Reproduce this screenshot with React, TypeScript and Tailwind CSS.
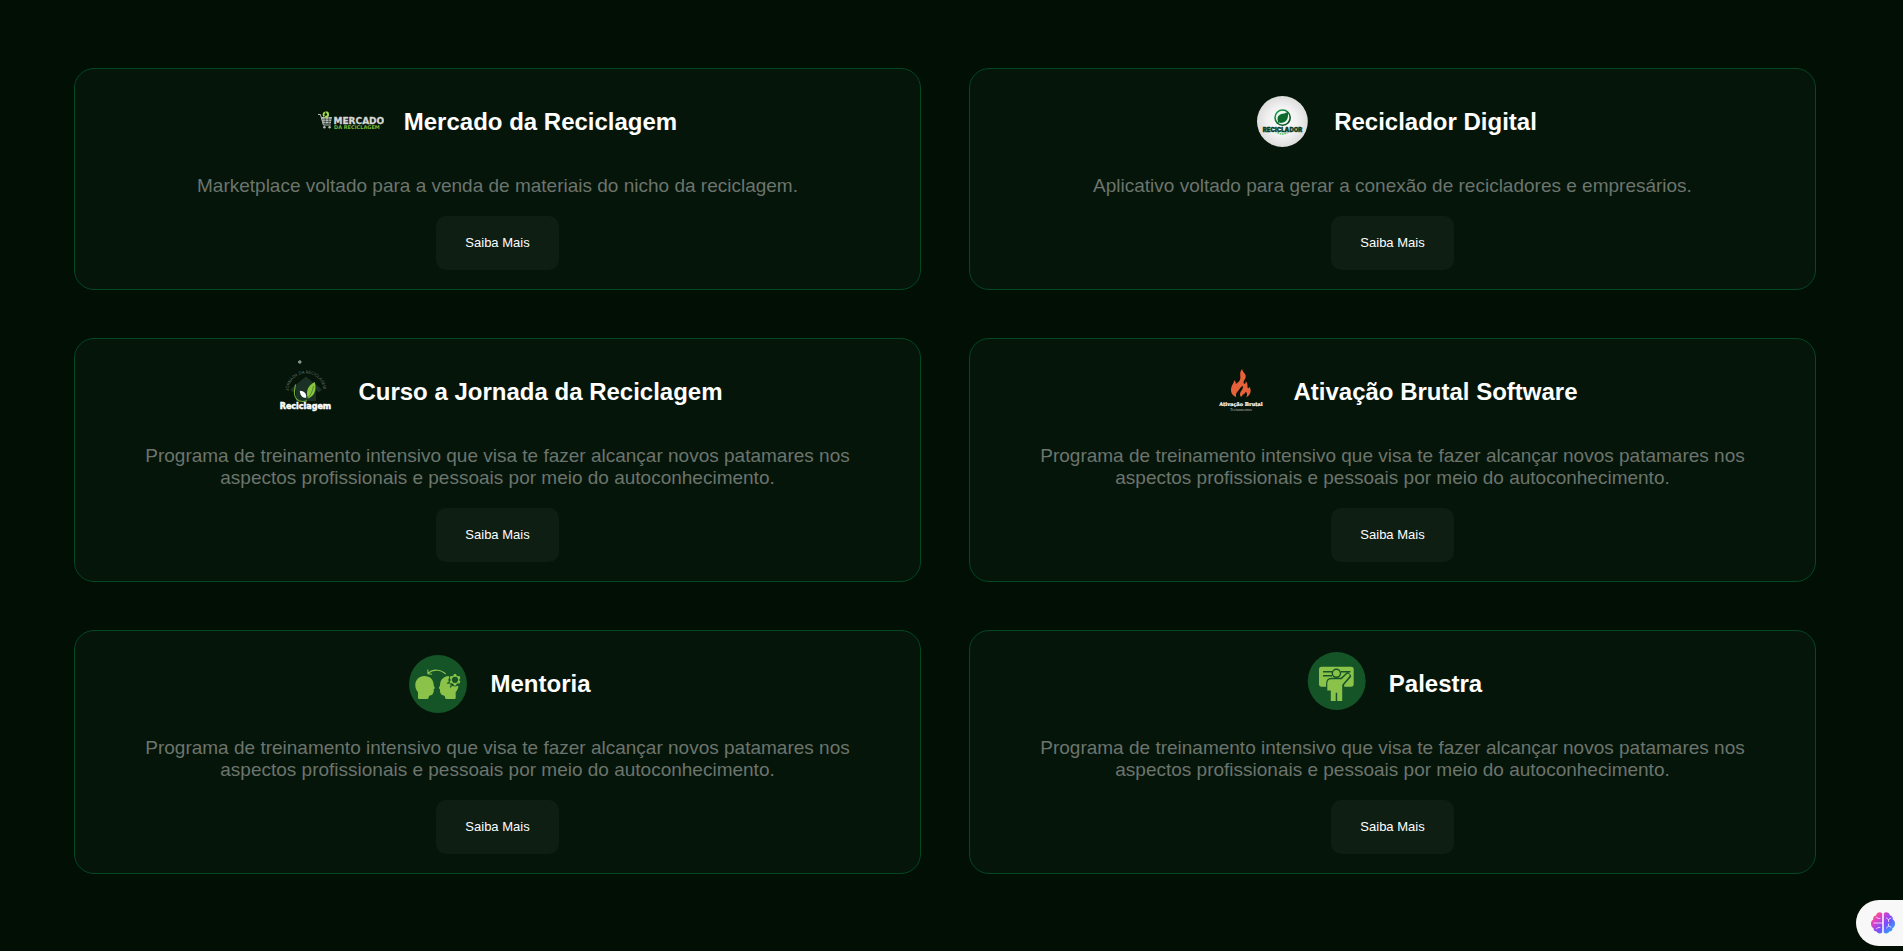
import type { ReactNode } from "react";

function MercadoLogo() {
  return (
    <svg viewBox="0 0 66 66" className="size-full" aria-hidden="true">
      <path d="M0 25.500h2.400l3 10.500h7.400" fill="none" stroke="#b9bdb9" strokeWidth="1" />
      <path d="M3.200 28h10.800l-1.200 6.600H5.200z" fill="#b9bdb9" />
      <path d="M4 30.200h10M5 32.400h8.800M7.200 28v6.600M10.800 28v6.600" stroke="#05150a" strokeWidth=".5" />
      <circle cx="6.400" cy="38.200" r="1.200" fill="#b9bdb9" />
      <circle cx="11.600" cy="38.200" r="1.200" fill="#b9bdb9" />
      <circle cx="7.800" cy="25.500" r="2.300" fill="#05150a" stroke="#a5dc4a" strokeWidth="1.900" strokeDasharray="4.200 .6" />
      <text x="15.500" y="35.300" fontFamily="'DejaVu Sans', sans-serif" fontWeight="700" fontSize="9" fill="#d5d7d5" stroke="#d5d7d5" strokeWidth=".3">
        MERCADO
      </text>
      <text x="16" y="39.600" fontFamily="'DejaVu Sans', sans-serif" fontWeight="700" fontSize="5" fill="#74b83a">
        DA RECICLAGEM
      </text>
    </svg>
  );
}

function RecicladorLogo() {
  return (
    <svg viewBox="0 0 66 66" className="size-full" aria-hidden="true">
      <defs>
        <radialGradient id="disc">
          <stop offset="0" stopColor="#ffffff" />
          <stop offset=".6" stopColor="#f1f1f1" />
          <stop offset="1" stopColor="#dcdddc" />
        </radialGradient>
        <linearGradient id="ring" x1="0" y1="0" x2="1" y2="1">
          <stop offset="0" stopColor="#16a34a" />
          <stop offset="1" stopColor="#06401d" />
        </linearGradient>
      </defs>
      <circle cx="34.400" cy="32.500" r="25.400" fill="url(#disc)" />
      <circle cx="34.600" cy="28.600" r="7.600" fill="#eef7f0" stroke="url(#ring)" strokeWidth="1.600" />
      <path d="M39.600 22.600c1.400 5.600-.4 10.600-5.400 11.200-1.600.2-2.600 0-3.400-.6l-1.300 2-.8-.5 1.300-2.400c-1.500-4.600 1.200-6.900 4.600-7.500 2.200-.4 3.800-.7 5-2.200z" fill="#0a6b2c" />
      <path d="M29.500 43.500q5 3 10 0" fill="none" stroke="#54c46c" strokeWidth="1.600" strokeDasharray="1.600 .8" />
      <text x="34.600" y="43" textAnchor="middle" fontFamily="Inter, sans-serif" fontWeight="900" fontSize="6" fill="#0a3f25" stroke="#0a3f25" strokeWidth=".4">
        RECICLADOR
      </text>
    </svg>
  );
}

function JornadaLogo() {
  return (
    <svg viewBox="0 0 66 66" className="size-full" aria-hidden="true">
      <circle cx="27.800" cy="3" r="1.300" fill="#6d746f" stroke="#b4b8b5" strokeWidth=".8" />
      <path d="M34 17.500 50 30.500l-3 3-3-2.300V42H24V31.200l-3 2.300-3-3z" fill="#1b3125" />
      <path id="arch" d="M16.500 32a17.500 17.500 0 0 1 35 0" fill="none" />
      <text fontFamily="Inter, sans-serif" fontSize="4" fill="#66736b">
        <textPath href="#arch">JORNADA DA RECICLAGEM</textPath>
      </text>
      <path d="M23.600 25.500c-1.600 6-2 12 1.400 15 2.800 2.400 7 2.200 10 1.200" fill="none" stroke="#6fae2f" strokeWidth="1.100" />
      <path d="M42.800 23c1.800 7 .4 13.800-6.800 16.500-3-7.800.7-13.500 6.800-16.500z" fill="#8bc53f" />
      <path d="M41.500 27c-1 5.600-3.600 11-8.500 14.500" fill="none" stroke="#3c6d20" strokeWidth=".7" />
      <path d="M27.800 31.800c4.400.2 7 2.800 6.400 7-3.800.5-6.200-2.600-6.400-7z" fill="#ffffff" />
      <text x="33.500" y="50.300" textAnchor="middle" fontFamily="'DejaVu Sans', sans-serif" fontWeight="700" fontSize="8" fill="#ffffff" stroke="#ffffff" strokeWidth=".5">
        Reciclagem
      </text>
    </svg>
  );
}

function AtivacaoLogo() {
  return (
    <svg viewBox="0 0 66 66" className="size-full" aria-hidden="true">
      <path
        d="M35.300 10C35 13.200 39.200 14.300 38.700 17.800 38.300 20.600 35.900 22 36.800 24.400 38.200 25.400 39 24.200 38.600 22.200 41.200 24 40.200 27 40.800 29 41.600 29.600 42.500 28.700 42.300 27.600 45.200 32 43.200 36.600 39.200 38.300 40.600 35.800 40.200 34 38.800 32.800 37.800 35.400 35.400 35.200 34.200 38.200 32.400 36.600 32.800 34.400 33.800 32.600 35 30.600 36.400 29.400 35.800 26.800 33 28.400 32.600 30.600 30.600 32.600 28.600 34.600 28.800 36.400 29.200 38.300 23 35.600 23.200 29.800 25.400 25.800 26.600 23.700 27 22.900 27 21.200 28.400 22 29 23.300 28.800 25 31.200 23.400 33.400 21.800 33.400 18.800 33.400 15.200 32.400 12.600 35.300 10z"
        fill="#e8613a"
      />
      <text x="34" y="46.700" textAnchor="middle" fontFamily="'DejaVu Serif', serif" fontWeight="700" fontSize="5" fill="#ffffff" stroke="#ffffff" strokeWidth=".2">
        Ativação Brutal
      </text>
      <text x="34" y="51.700" textAnchor="middle" fontFamily="'Liberation Serif', serif" fontSize="4" fill="#b3bab5">
        Treinamentos
      </text>
    </svg>
  );
}

function MentoriaIcon() {
  const teeth = [0, 60, 120, 180, 240, 300];
  return (
    <svg viewBox="0 0 66 66" className="size-full" aria-hidden="true">
      <circle cx="34" cy="33" r="29" fill="#155427" />
      <g fill="#8bc34a">
        <path d="M20.300 25c5.700 0 9 3.600 9.300 8 0 1 .1 1.800.7 2.700.6.900.7 1.700-.2 2.200-.5.300-.6.800-.4 1.500.3.900-.1 1.500-.4 2.200-.4 1.900-1.200 2.700-3.100 2.800-1.200.1-1.400.7-1.500 1.900 0 1.200-.5 1.700-1.700 1.700H15.500c-1 0-1.500-.5-1.500-1.500v-5.300c-1.900-2.200-2.700-4.600-2.700-7.300 0-5 3.900-8.900 9-8.900z" />
        <path d="M44.500 25c-5.300.5-8.100 4-8.400 8 0 1-.1 1.800-.7 2.700-.6.900-.7 1.700.2 2.200.5.300.6.800.4 1.500-.3.900.1 1.500.4 2.200.4 1.900 1.200 2.700 3.100 2.800 1.200.1 1.400.7 1.500 1.900 0 1.200.5 1.700 1.700 1.700h7.500c1 0 1.500-.5 1.500-1.500v-5.300c1.600-1.900 2.500-3.900 2.700-6.200z" />
      </g>
      <circle cx="51" cy="28.800" r="6.600" fill="#155427" />
      <path d="M45.700 31.500l-2.500.8M47.500 34.300l-1.200 2" stroke="#155427" strokeWidth="1.400" />
      <g fill="#8bc34a">
        {teeth.map((a) => (
          <rect key={a} x="49.700" y="23.100" width="2.600" height="2.600" rx=".6" transform={`rotate(${a} 51 28.800)`} />
        ))}
      </g>
      <circle cx="51" cy="28.800" r="3.900" fill="none" stroke="#8bc34a" strokeWidth="1.300" />
      <path d="M41.700 23c-4.700-4.600-12.500-5.400-17.600-.6M23.900 18.500v4.300l4.200.4" fill="none" stroke="#8bc34a" strokeWidth="1.100" />
    </svg>
  );
}

function PalestraIcon() {
  return (
    <svg viewBox="4 0 66 66" className="size-full" aria-hidden="true">
      <circle cx="37.700" cy="30" r="29" fill="#155427" />
      <rect x="20" y="15.700" width="34.700" height="20" rx="2.600" fill="#8bc34a" />
      <path d="M24 20.700h9M24 24.700h9M42 20.700h9.500" stroke="#155427" strokeWidth="1.500" />
      <path
        d="M32.500 28.500h10l6-5.600 2 2.200-7 8V50h-5v-8.500h-1.300V50h-5V39.500h-3.400v-6.500c0-3 1.500-4.500 3.700-4.500z"
        fill="#155427"
        stroke="#155427"
        strokeWidth="3.400"
        strokeLinejoin="round"
      />
      <circle cx="37.400" cy="22.300" r="4.800" fill="#155427" />
      <circle cx="37.400" cy="22.300" r="3.300" fill="#8bc34a" />
      <path
        d="M32 28.300h10.700l5.200-5.300c1.500-1 3.400.6 2.500 2.200l-7.200 8.600V50h-5v-8.300h-1.500V50h-4.900V39.500h-3.500v-6.800c0-3 1.500-4.400 3.700-4.400z"
        fill="#8bc34a"
      />
    </svg>
  );
}

function BrainIcon() {
  return (
    <svg viewBox="0 0 24 24" className="size-6" aria-hidden="true">
      <defs>
        <linearGradient id="brain" x1="0" y1="0" x2="1" y2=".9">
          <stop offset="0" stopColor="#ff8a3d" />
          <stop offset=".28" stopColor="#e93fc0" />
          <stop offset=".6" stopColor="#7a4dff" />
          <stop offset="1" stopColor="#1fb6f5" />
        </linearGradient>
      </defs>
      <path
        d="M11.200 2.400v19.200c-1.600 1.400-4.600 1.200-5.400-1.100-2.200.2-3.600-1.400-3.200-3.300C.8 16.300 0 14.900 0 12.500c0-2 .8-3.300 2.200-4-.4-2.400 1-3.900 2.800-4C5.700 1 9.700.4 11.200 2.400zM12.800 2.400v19.200c1.600 1.400 4.600 1.200 5.400-1.100 2.200.2 3.600-1.400 3.200-3.300 1.800-.9 2.600-2.300 2.600-4.700 0-2-.8-3.300-2.200-4 .4-2.400-1-3.900-2.800-4-.7-3.500-4.700-4.100-6.200-2.100z"
        fill="url(#brain)"
      />
      <path
        d="M3 12h8M5.500 6.500q1.500 1.600 3.500 1M5.500 17.500q1.500-1.600 3.500-1M15.500 7l2 1.500L20 7M17.500 8.500v2M15.500 17l2-2 2.500 1M17.500 15v-2"
        fill="none"
        stroke="#f3dcfb"
        strokeWidth=".9"
        strokeLinecap="round"
      />
    </svg>
  );
}

type Product = { title: string; text: string; logo: ReactNode };

const program =
  "Programa de treinamento intensivo que visa te fazer alcançar novos patamares nos aspectos profissionais e pessoais por meio do autoconhecimento.";

const products: Product[] = [
  {
    title: "Mercado da Reciclagem",
    text: "Marketplace voltado para a venda de materiais do nicho da reciclagem.",
    logo: <MercadoLogo />,
  },
  {
    title: "Reciclador Digital",
    text: "Aplicativo voltado para gerar a conexão de recicladores e empresários.",
    logo: <RecicladorLogo />,
  },
  { title: "Curso a Jornada da Reciclagem", text: program, logo: <JornadaLogo /> },
  { title: "Ativação Brutal Software", text: program, logo: <AtivacaoLogo /> },
  { title: "Mentoria", text: program, logo: <MentoriaIcon /> },
  { title: "Palestra", text: program, logo: <PalestraIcon /> },
];

function Card({ title, text, logo }: Product) {
  return (
    <article className="flex flex-col items-center rounded-[20px] border border-[#024824] bg-[#051509] px-10 pt-5 pb-[19px]">
      <header className="flex items-center gap-5">
        <div className="size-[66px] shrink-0">{logo}</div>
        <h2 className="text-2xl font-bold text-white">{title}</h2>
      </header>
      <p className="mt-5 max-w-[720px] text-center text-[19px] leading-[22px] text-[#6c746d]">{text}</p>
      <button type="button" className="mt-[19px] h-[54px] rounded-[10px] bg-[#0f1e13] px-[29px] text-[13px] text-white">
        Saiba Mais
      </button>
    </article>
  );
}

export default function App() {
  return (
    <div className="min-h-screen bg-[#010f04] font-['Liberation_Sans',Arial,sans-serif]">
      <main className="grid grid-cols-2 gap-12 pt-[68px] pr-[87px] pb-[74px] pl-[74px]">
        {products.map((p) => (
          <Card key={p.title} {...p} />
        ))}
      </main>
      <button
        type="button"
        aria-label="Assistente"
        className="fixed right-0 bottom-[5px] flex h-[46px] w-[47px] items-center rounded-l-full bg-[#f8f8f9] pl-[15px]"
      >
        <BrainIcon />
      </button>
    </div>
  );
}
